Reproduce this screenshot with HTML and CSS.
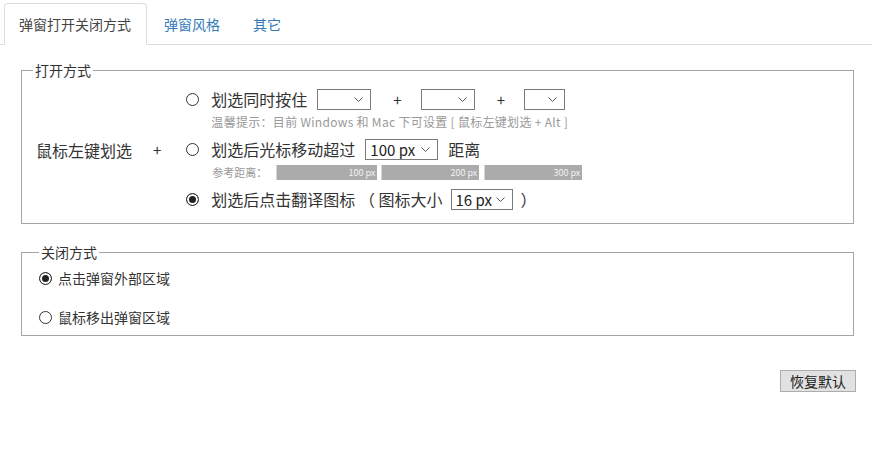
FILE: index.html
```html
<!DOCTYPE html>
<html lang="zh-CN">
<head>
  <meta charset="UTF-8" />
  <title>划词翻译 – 设置</title>
  <link rel="stylesheet" href="styles.css">
</head>
<body>
  <ul class="nav-tabs">
    <li class="active"><a>弹窗打开关闭方式</a></li>
    <li><a>弹窗风格</a></li>
    <li><a>其它</a></li>
  </ul>

  <div class="content">
    <fieldset class="group open-group">
      <legend>打开方式</legend>
      <div class="trigger">
        <span class="trigger-label">鼠标左键划选</span>
        <span class="trigger-plus">+</span>
        <div class="options">
          <label class="opt-row">
            <input type="radio" name="open" class="radio" />
            <span>划选同时按住</span>
            <span class="select w54"><select><option></option></select><svg class="chev" width="9" height="5" viewBox="0 0 9 5"><path d="M0.5 0.5 L4.5 4.5 L8.5 0.5" fill="none" stroke="#555" stroke-width="1"/></svg></span>
            <span class="plus">+</span>
            <span class="select w54"><select><option></option></select><svg class="chev" width="9" height="5" viewBox="0 0 9 5"><path d="M0.5 0.5 L4.5 4.5 L8.5 0.5" fill="none" stroke="#555" stroke-width="1"/></svg></span>
            <span class="plus">+</span>
            <span class="select w41"><select><option></option></select><svg class="chev" width="9" height="5" viewBox="0 0 9 5"><path d="M0.5 0.5 L4.5 4.5 L8.5 0.5" fill="none" stroke="#555" stroke-width="1"/></svg></span>
          </label>
          <div class="hint">温馨提示：目前 Windows 和 Mac 下可设置 [ 鼠标左键划选 + Alt ]</div>

          <label class="opt-row row2">
            <input type="radio" name="open" class="radio" />
            <span>划选后光标移动超过</span>
            <span class="select w73"><select><option>100 px</option></select><svg class="chev" width="9" height="5" viewBox="0 0 9 5"><path d="M0.5 0.5 L4.5 4.5 L8.5 0.5" fill="none" stroke="#555" stroke-width="1"/></svg></span>
            <span class="after">距离</span>
          </label>
          <div class="ref">
            <span class="ref-label">参考距离：</span>
            <span class="bar b1">100 px</span>
            <span class="bar">200 px</span>
            <span class="bar">300 px</span>
          </div>

          <label class="opt-row row3">
            <input type="radio" name="open" class="radio" checked />
            <span>划选后点击翻译图标 （ 图标大小</span>
            <span class="select w62"><select><option>16 px</option></select><svg class="chev" width="9" height="5" viewBox="0 0 9 5"><path d="M0.5 0.5 L4.5 4.5 L8.5 0.5" fill="none" stroke="#555" stroke-width="1"/></svg></span>
            <span class="after">）</span>
          </label>
        </div>
      </div>
    </fieldset>

    <fieldset class="group close-group">
      <legend>关闭方式</legend>
      <label class="close-row">
        <input type="radio" name="close" class="radio" checked />
        <span>点击弹窗外部区域</span>
      </label>
      <label class="close-row">
        <input type="radio" name="close" class="radio" />
        <span>鼠标移出弹窗区域</span>
      </label>
    </fieldset>

    <div class="actions">
      <button class="btn-reset">恢复默认</button>
    </div>
  </div>
</body>
</html>
```

FILE: styles.css
```css
* { box-sizing: border-box; }
body {
  margin: 0;
  font-family: "Noto Sans CJK SC", "Noto Sans", sans-serif;
  color: #333;
  background: #fff;
}

/* tabs */
.nav-tabs {
  list-style: none;
  display: flex;
  margin: 0 4px 0 0;
  padding: 3px 0 0 4px;
  border-bottom: 1px solid #ddd;
}
.nav-tabs li { margin-bottom: -1px; margin-right: 2px; }
.nav-tabs a {
  display: block;
  padding: 10px 15px 10px 14px;
  line-height: 20px;
  font-size: 14px;
  color: #337ab7;
  border: 1px solid transparent;
  border-radius: 4px 4px 0 0;
}
.nav-tabs .active a {
  color: #444;
  background: #fff;
  border-color: #ddd #ddd transparent;
}

.content { padding: 15px 22px 0 21px; }

/* fieldsets */
.group {
  margin: 0;
  border: 1px solid #a5a5a5;
  padding: 9px 14px 13px 11px;
}
.group legend {
  font-size: 14px;
  line-height: 20px;
  padding: 0 2px;
  color: #333;
}
.close-group { margin-top: 18px; padding: 6px 14px 8px 17px; }

.trigger { display: flex; align-items: center; }
.trigger-label { font-size: 16px; margin-left: 3px; }
.trigger-plus { font-size: 15px; margin: 0 25px 0 21px; }

.options { display: flex; flex-direction: column; }
.opt-row {
  display: flex;
  align-items: center;
  height: 21px;
  font-size: 16px;
  line-height: 21px;
}
.row2, .row3 { margin-top: 9px; }

.radio {
  appearance: none;
  -webkit-appearance: none;
  width: 13px;
  height: 13px;
  margin: 0 12px 0 0;
  border: 1px solid #333;
  border-radius: 50%;
  background: #fff;
  flex: none;
}
.radio:checked {
  background: #222;
  box-shadow: inset 0 0 0 2px #fff;
}

.select {
  position: relative;
  display: inline-block;
  height: 21px;
  margin-left: 10px;
}
.select select {
  appearance: none;
  -webkit-appearance: none;
  width: 100%;
  height: 21px;
  margin: 0;
  padding: 0 0 0 4px;
  border: 1px solid #7a7a7a;
  border-radius: 0;
  background: #fff;
  font-family: inherit;
  font-size: 15px;
  line-height: 19px;
  color: #222;
}
.select .chev { position: absolute; right: 8px; top: 8px; pointer-events: none; }
.w54 { width: 54px; }
.w41 { width: 41px; }
.w73 { width: 73px; }
.w62 { width: 62px; }
.row3 .select { margin-left: 8px; }

.plus { font-size: 15px; margin: 0 9px 0 22px; }
.after { margin-left: 10px; }
.row3 .after { margin-left: 8px; }

.hint {
  margin-top: 4px;
  padding-left: 25px;
  font-size: 12px;
  line-height: 16px;
  letter-spacing: 0.3px;
  color: #999;
}

.ref {
  display: flex;
  align-items: center;
  margin-top: 4px;
  padding-left: 26px;
  height: 16px;
}
.ref-label { font-size: 11px; color: #999; width: 64px; }
.bar {
  width: 98px;
  height: 15px;
  margin-right: 5px;
  padding-right: 2px;
  background: #ababab;
  border-left: 1px solid #d5d5d5;
  color: #f2f2f2;
  font-size: 9px;
  line-height: 15px;
  text-align: right;
}
.bar.b1 { width: 101px; margin-right: 4px; }

.close-row {
  display: flex;
  align-items: center;
  font-size: 14px;
  line-height: 20px;
}
.close-row .radio { margin-right: 6px; }
.close-row + .close-row { margin-top: 19px; }

.actions { display: flex; justify-content: flex-end; margin: 34px -2px 0 0; }
.btn-reset {
  width: 76px;
  height: 22px;
  padding: 0;
  border: 1px solid #adadad;
  border-radius: 0;
  background: #e1e1e1;
  font-family: inherit;
  font-size: 14px;
  line-height: 20px;
  color: #222;
}
```
